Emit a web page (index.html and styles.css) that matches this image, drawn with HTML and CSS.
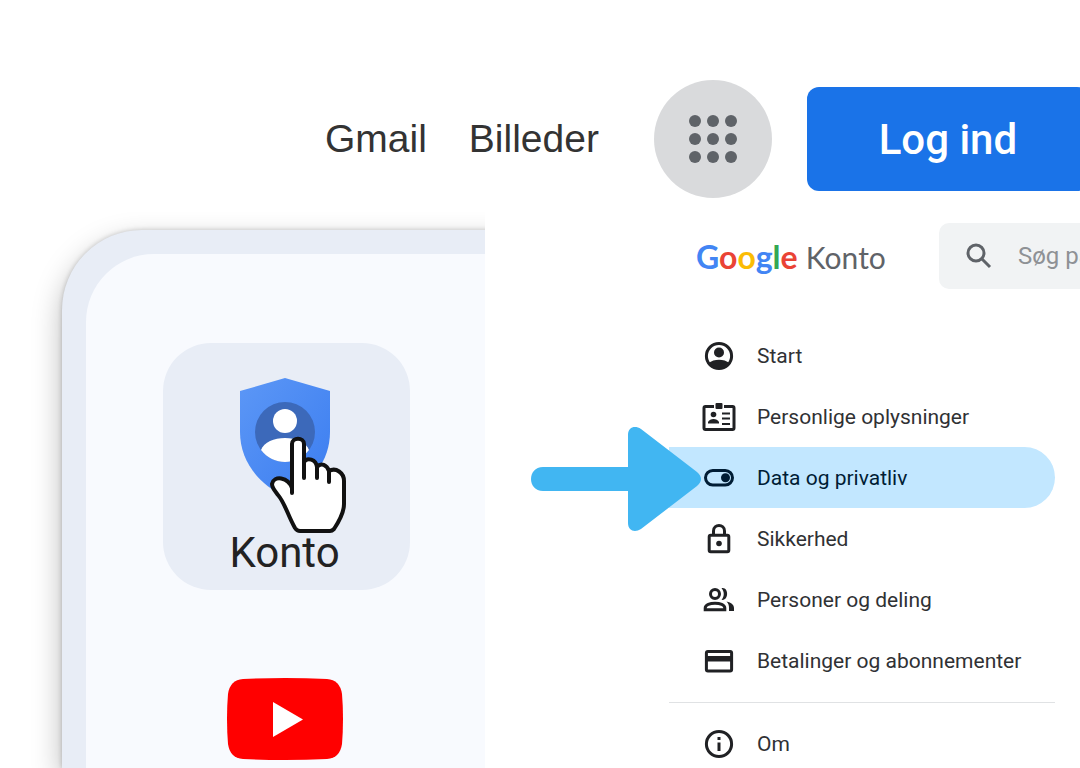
FILE: index.html
```
<!DOCTYPE html>
<html lang="da">
<head>
  <meta charset="utf-8">
  <meta name="viewport" content="width=device-width, initial-scale=1">
  <title>Google Konto</title>
  <link rel="stylesheet" href="styles.css">
</head>
<body>
  <header class="topbar">
    <a class="top-link" href="#gmail">Gmail</a>
    <a class="top-link images" href="#billeder">Billeder</a>
    <button class="apps-btn" type="button" aria-label="Google-apps">
      <svg viewBox="0 0 48 48" width="48" height="48" fill="#5f6368">
        <circle cx="6" cy="6" r="6"/><circle cx="24" cy="6" r="6"/><circle cx="42" cy="6" r="6"/>
        <circle cx="6" cy="24" r="6"/><circle cx="24" cy="24" r="6"/><circle cx="42" cy="24" r="6"/>
        <circle cx="6" cy="42" r="6"/><circle cx="24" cy="42" r="6"/><circle cx="42" cy="42" r="6"/>
      </svg>
    </button>
    <button class="login-btn" type="button">Log ind</button>
  </header>

  <main class="content">
    <section class="apps">
      <div class="apps-frame">
        <div class="apps-panel">
          <a class="app active" href="#konto">
            <svg class="shield" viewBox="0 0 92 118" width="92" height="118">
              <defs>
                <linearGradient id="shieldFill" x1="0" y1="0" x2="1" y2="1">
                  <stop offset="0" stop-color="#5c97f6"/>
                  <stop offset="1" stop-color="#3b7df0"/>
                </linearGradient>
              </defs>
              <path fill="url(#shieldFill)" d="M46 0 91 13V54C91 83 72 107 46 118 20 107 1 83 1 54V13Z"/>
              <circle cx="46" cy="54" r="30" fill="#3c69ba"/>
              <circle cx="46" cy="43" r="12" fill="#fff"/>
              <path fill="#fff" d="M22 72C25 64 35 60 46 60s21 4 24 12C64 80 55 84 46 84S28 80 22 72Z"/>
            </svg>
            <svg class="hand" viewBox="0 0 76 98" width="76" height="98">
              <path fill="#fff" stroke="#111" stroke-width="4" stroke-linejoin="round" d="M22 57V8C22 1 34 1 34 8V26C37 21 46 23 47 31 51 26 57 29 59 35 66 31 74 37 74 45V68C74 77 68 87 64 93Q62 95 60 95H30Q27 95 25 92C18 80 15 67 8 59 5 55 2 52 2 48 4 39 18 41 22 52Z"/>
              <path fill="none" stroke="#111" stroke-width="4" stroke-linecap="round" d="M34 24V42M47 30V42M59 34V46"/>
            </svg>
            <span>Konto</span>
          </a>
          <a class="app" href="#youtube" aria-label="YouTube">
            <svg viewBox="0 0 116 82" width="116" height="82">
              <path fill="#f00" d="M16 1Q58-1 100 1 113 2 115 16 117 41 115 66 113 80 100 81 58 83 16 81 3 80 1 66-1 41 1 16 3 2 16 1Z"/>
              <path fill="#fff" d="M46 24 76 41.500 46 59Z"/>
            </svg>
          </a>
        </div>
      </div>
    </section>

    <section class="account">
      <div class="account-bar">
        <a class="logo" href="#start"><span class="google"><b class="blue">G</b><b class="red">o</b><b class="yellow">o</b><b class="blue">g</b><b class="green">l</b><b class="red">e</b></span> <span class="product">Konto</span></a>
        <label class="search">
          <svg viewBox="0 0 26 26" width="26" height="26" fill="none" stroke="#5f6368" stroke-width="3">
            <circle cx="10" cy="10" r="8"/><path d="m15.500 15.500 8.500 8.500"/>
          </svg>
          <input type="text" placeholder="Søg på Google Konto" aria-label="Søg på Google Konto">
        </label>
      </div>

      <nav class="menu">
        <a href="#start">
          <svg viewBox="0 0 34 34">
            <circle cx="17" cy="17" r="12.600" class="line"/>
            <circle cx="17" cy="13.500" r="5"/>
            <path d="M6.500 24C12 19.500 22 19.500 27.500 24 25 28 21 30 17 30S9 28 6.500 24Z"/>
          </svg>
          Start
        </a>
        <a href="#oplysninger">
          <svg viewBox="0 0 34 34">
            <path class="line" d="M12 6.500H3.500Q2 6.500 2 8V28Q2 29.500 3.500 29.500H30.500Q32 29.500 32 28V8Q32 6.500 30.500 6.500H22"/>
            <rect x="13.500" y="3" width="7" height="6" rx="1"/>
            <circle cx="11.500" cy="14.500" r="2.800"/>
            <path d="M6 23.500V22C8 18 15 18 17 22V23.500Z"/>
            <path class="thin" d="M20 13.500H28M20 18.500H28M20 24H28"/>
          </svg>
          Personlige oplysninger
        </a>
        <a class="selected" href="#privatliv">
          <svg viewBox="0 0 34 34">
            <rect x="3.500" y="9.500" width="27" height="14.500" rx="7.250" class="line"/>
            <circle cx="23.500" cy="16.750" r="4.500"/>
          </svg>
          Data og privatliv
        </a>
        <a href="#sikkerhed">
          <svg viewBox="0 0 34 34">
            <rect x="7.200" y="13.200" width="19.600" height="16.600" rx="1.500" class="line"/>
            <path class="line" d="M11.500 13V9C11.500 1.800 22.500 1.800 22.500 9V13"/>
            <circle cx="17" cy="21.500" r="2.800"/>
          </svg>
          Sikkerhed
        </a>
        <a href="#deling">
          <svg viewBox="0 0 34 34">
            <circle cx="13" cy="11" r="4.500" class="line"/>
            <path class="line" d="M3.200 26.800V25C3.200 18.500 22.800 18.500 22.800 25V26.800Z"/>
            <path d="M19.500 5.200C27 3.500 27 18.500 19.500 16.800 22.500 13.500 22.500 8.500 19.500 5.200ZM24.500 18.500C29.500 19.500 32 22 32 25V28H27V25C27 22.500 26.500 20.500 24.500 18.500Z"/>
          </svg>
          Personer og deling
        </a>
        <a href="#betalinger">
          <svg viewBox="0 0 34 34">
            <rect x="4.400" y="7.400" width="25.200" height="19.600" rx="1.500" class="line"/>
            <path d="M4 12H30V17.500H4Z"/>
          </svg>
          Betalinger og abonnementer
        </a>
        <hr>
        <a href="#om">
          <svg viewBox="0 0 34 34">
            <circle cx="17" cy="17" r="12.600" class="line"/>
            <path class="line" d="M17 15.500V24M17 10V13"/>
          </svg>
          Om
        </a>
      </nav>

      <svg class="arrow" viewBox="0 0 170 104" width="170" height="104" fill="#41b6f2">
        <path d="M12 40H97V8C97 0 104-2 110 2L166 45Q174 52 166 59L110 102C104 106 97 104 97 96V64H12C-4 64-4 40 12 40Z"/>
      </svg>
    </section>
  </main>
</body>
</html>
```
FILE: styles.css
```
html, body {
  height: 100%;
}
body {
  margin: 0;
  display: flex;
  flex-direction: column;
  overflow: hidden;
  background: #fff;
  font-family: Roboto, "Liberation Sans", sans-serif;
}
a {
  color: inherit;
  text-decoration: none;
}
button {
  border: none;
  padding: 0;
}

/* top bar */
.topbar {
  display: flex;
  flex-shrink: 0;
  align-items: center;
  padding: 80px 0 14px 325px;
}
.top-link {
  font-family: "Liberation Sans", Arial, sans-serif;
  font-size: 39px;
  color: #333;
}
.top-link.images {
  margin: 0 55px 0 42px;
}
.apps-btn {
  display: flex;
  flex-shrink: 0;
  align-items: center;
  justify-content: center;
  width: 118px;
  height: 118px;
  border-radius: 50%;
  background: #d9dadc;
}
.login-btn {
  flex-shrink: 0;
  width: 282px;
  height: 104px;
  margin-left: 35px;
  border-radius: 12px;
  background: #1a73e8;
  color: #fff;
  font-family: inherit;
  font-size: 42px;
  font-weight: 500;
}

.content {
  display: flex;
  flex: 1;
  min-height: 0;
}

/* app launcher */
.apps {
  display: flex;
  width: 485px;
  flex-shrink: 0;
  box-sizing: border-box;
  padding: 18px 0 0 62px;
  overflow: hidden;
}
.apps-frame {
  display: flex;
  flex: 1;
  margin-right: -100px;
  padding: 24px 0 0 24px;
  border-radius: 80px 0 0 0;
  background: #e8edf6;
  box-shadow: 0 12px 30px rgba(0,0,0,.28), 0 0 5px rgba(0,0,0,.2);
}
.apps-panel {
  flex: 1;
  padding: 89px 0 0 77px;
  border-radius: 68px 0 0 0;
  background: #f8fafe;
}
.app {
  position: relative;
  display: flex;
  flex-direction: column;
  align-items: center;
  width: 247px;
  height: 247px;
  box-sizing: border-box;
  padding: 35px 4px 0 0;
  margin-bottom: 53px;
  border-radius: 48px;
  font-size: 42px;
  line-height: 50px;
  color: #222;
}
.app.active {
  background: #e8edf6;
}
.app span {
  margin-top: 32px;
}
.hand {
  position: absolute;
  left: 107px;
  top: 93px;
}

/* account page */
.account {
  position: relative;
  flex: 1;
  min-width: 0;
  padding: 11px 0 0 184px;
}
.account-bar {
  display: flex;
  align-items: center;
  margin-left: 27px;
  overflow: hidden;
}
.logo {
  flex-shrink: 0;
  width: 243px;
  font-family: Lato, sans-serif;
  font-size: 32px;
  white-space: nowrap;
}
.google b {
  font-weight: bold;
}
.product {
  font-size: 30px;
  color: #5f6368;
}
.blue { color: #4285f4; }
.red { color: #ea4335; }
.yellow { color: #fbbc04; }
.green { color: #34a853; }
.search {
  display: flex;
  flex-shrink: 0;
  align-items: center;
  gap: 26px;
  width: 400px;
  height: 66px;
  box-sizing: border-box;
  padding-left: 27px;
  border-radius: 10px;
  background: #f1f3f4;
}
.search input {
  flex: 1;
  border: none;
  outline: none;
  padding: 0;
  background: transparent;
  font-family: inherit;
  font-size: 24px;
}
.search input::placeholder {
  color: #8e9195;
}
.menu {
  margin: 36px 25px 0 0;
}
.menu a {
  display: flex;
  align-items: center;
  gap: 21px;
  height: 61px;
  padding-left: 33px;
  border-radius: 0 31px 31px 0;
  font-size: 21px;
  color: #303134;
  white-space: nowrap;
}
.menu a.selected {
  background: #c2e7ff;
  color: #001d35;
}
.menu svg {
  width: 34px;
  height: 34px;
  fill: #202124;
}
.menu .selected svg {
  fill: #001d35;
}
.menu .line {
  fill: none;
  stroke: #202124;
  stroke-width: 3;
}
.menu .selected .line {
  stroke: #001d35;
}
.menu .thin {
  stroke: #202124;
  stroke-width: 2;
}
.menu hr {
  height: 1px;
  margin: 11px 0 10px;
  border: none;
  background: #e0e2e4;
}
.arrow {
  position: absolute;
  left: 46px;
  top: 215px;
}
```
